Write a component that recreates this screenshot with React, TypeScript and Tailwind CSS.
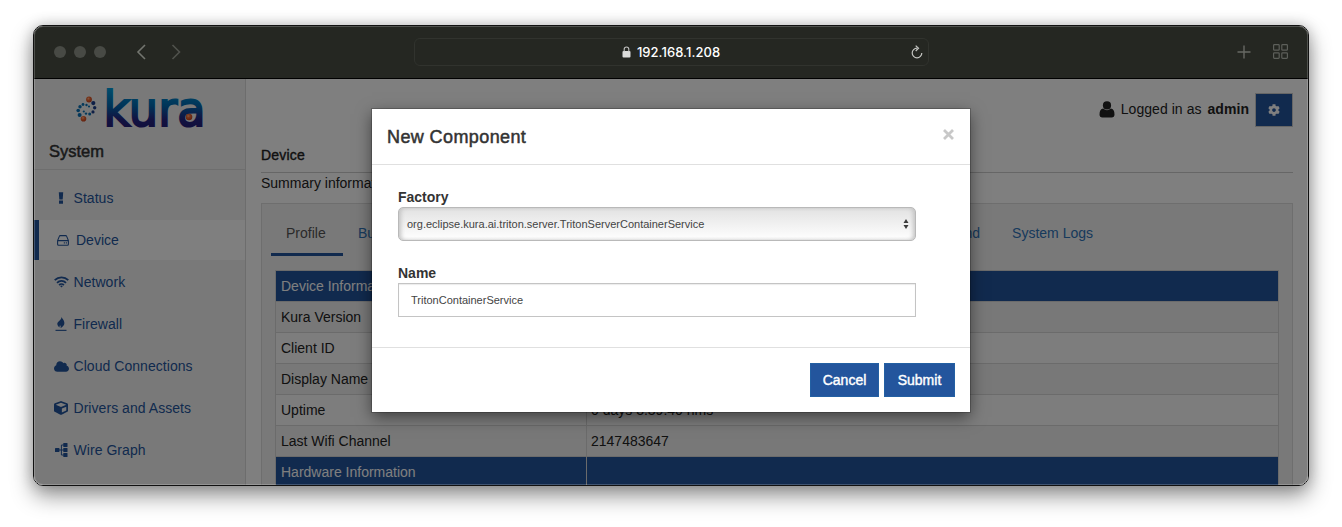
import type { ReactNode } from "react";
import { FaCloud, FaCog, FaCube } from "react-icons/fa";

function FlameIcon() {
  return (
    <svg width="12" height="14" viewBox="0 0 12 14" fill="currentColor">
      <path d="M6.6 0C7 1.6 9.4 3.2 9.4 6C9.4 8.4 7.6 9.8 5.4 11.2C6 9.8 5.8 9 5 8.2C4.6 9 4.5 9.6 4.6 10.6C3.2 9.6 2.3 8.2 2.3 6.8C2.3 4.4 6.5 3.2 6.6 0Z" />
      <rect x="0.5" y="12.8" width="11" height="1.1" />
    </svg>
  );
}

function AlertIcon() {
  return (
    <svg width="6" height="12" viewBox="0 0 6 12" fill="currentColor">
      <path d="M0.8 0.3H5.2L4.7 7.6H1.3ZM1 8.6H5V11.8H1Z" />
    </svg>
  );
}

function DriveIcon() {
  return (
    <svg width="12" height="11" viewBox="0 0 12 11" fill="none" stroke="currentColor" strokeWidth="1.1">
      <path d="M0.6 5.6L2.3 1.4Q2.6 0.6 3.4 0.6H8.6Q9.4 0.6 9.7 1.4L11.4 5.6V9.2Q11.4 10.2 10.4 10.2H1.6Q0.6 10.2 0.6 9.2ZM0.8 5.6H11.2" />
      <path d="M6.8 7.9H7.9M8.8 7.9H9.9" />
    </svg>
  );
}

function WifiIcon() {
  return (
    <svg width="15" height="12" viewBox="0 0 15 12" fill="none" stroke="currentColor" strokeWidth="1.8" className="shrink-0">
      <path d="M0.7 4.2A9.7 9.7 0 0 1 14.3 4.2" />
      <path d="M3 6.8A6.4 6.4 0 0 1 12 6.8" />
      <path d="M5.1 9.1A3.4 3.4 0 0 1 9.9 9.1" />
      <path d="M6.1 10L7.5 11.6L8.9 10Q7.5 9 6.1 10Z" fill="currentColor" stroke="none" />
    </svg>
  );
}

function GraphIcon() {
  return (
    <svg width="13" height="14" viewBox="0 0 13 14" fill="currentColor" className="shrink-0">
      <rect x="0" y="5" width="4.4" height="4" rx="0.6" />
      <rect x="8.3" y="0" width="4.2" height="4" rx="0.6" />
      <rect x="8.3" y="5" width="4.2" height="4" rx="0.6" />
      <rect x="8.3" y="10" width="4.2" height="4" rx="0.6" />
      <path d="M4 7H9M9 2H6.4V12H9" fill="none" stroke="currentColor" strokeWidth="1" />
    </svg>
  );
}

function UserIcon() {
  return (
    <svg width="16" height="17" viewBox="0 0 16 17" fill="#222" className="mr-1.5">
      <circle cx="8" cy="4.4" r="4.1" />
      <path d="M4.2 7.6Q0.5 8.2 0.5 13.6Q0.5 16.6 3.4 16.6H12.6Q15.5 16.6 15.5 13.6Q15.5 8.2 11.8 7.6Q8 11 4.2 7.6Z" />
    </svg>
  );
}

const navItems: { label: string; icon: ReactNode; active?: boolean }[] = [
  { label: "Status", icon: <AlertIcon /> },
  { label: "Device", icon: <DriveIcon />, active: true },
  { label: "Network", icon: <WifiIcon /> },
  { label: "Firewall", icon: <FlameIcon /> },
  { label: "Cloud Connections", icon: <FaCloud size={15} className="shrink-0" /> },
  { label: "Drivers and Assets", icon: <FaCube size={14} /> },
  { label: "Wire Graph", icon: <GraphIcon /> },
];

const dots: [number, number, number][] = [
  [7, 9, 1.4], [10.5, 9.5, 1.2], [13, 11, 1.1], [4, 11.2, 1.7], [2.2, 15, 1.8], [3.6, 19.5, 2],
  [17.3, 7.6, 2.1], [18.7, 12.2, 1.7], [17, 16.4, 1.6], [13.7, 18.6, 1.5], [10, 18.1, 1.2], [7.8, 16, 1.1],
];

function Logo() {
  return (
    <svg width="130" height="42" viewBox="0 0 130 42" className="block overflow-visible">
      <defs>
        <linearGradient id="word" x1="0" y1="1" x2="0" y2="39" gradientUnits="userSpaceOnUse">
          <stop offset="0" stopColor="#0099d8" />
          <stop offset="0.45" stopColor="#0068b0" />
          <stop offset="0.8" stopColor="#252583" />
          <stop offset="1" stopColor="#231f7b" />
        </linearGradient>
        <radialGradient id="ball" cx="0.4" cy="0.35" r="0.65">
          <stop offset="0" stopColor="#ffae88" />
          <stop offset="0.4" stopColor="#f06a32" />
          <stop offset="1" stopColor="#c8421d" />
        </radialGradient>
      </defs>
      {dots.map(([x, y, r], i) => (
        <circle key={i} cx={x} cy={y + 7.5} r={r} fill={i > 5 && i < 9 ? "#1f3f8c" : "#0a70b4"} />
      ))}
      <circle cx="13" cy="11.5" r="2.9" fill="url(#ball)" />
      <circle cx="7.5" cy="30.7" r="2.8" fill="url(#ball)" />
      <text x="27.5" y="37.8" fontFamily="DejaVu Sans" fontSize="48" textLength="102" lengthAdjust="spacingAndGlyphs" fill="url(#word)" stroke="url(#word)" strokeWidth="2">
        kura
      </text>
      <circle cx="113" cy="29" r="3.3" fill="url(#ball)" />
    </svg>
  );
}

function Sidebar() {
  return (
    <aside className="flex w-[212px] shrink-0 flex-col border-r border-[#dadada] bg-[#f3f3f3]">
      <div className="h-[91px] border-b border-[#dcdcdc] pl-[15px]">
        <div className="pt-[9px] pl-[27px]">
          <Logo />
        </div>
        <h2 className="mt-[9px] text-[16.5px] leading-6 text-[#333] [-webkit-text-stroke:0.5px]">System</h2>
      </div>
      <nav className="flex flex-col gap-[2px] pt-2">
        {navItems.map((item) => (
          <a
            key={item.label}
            className={
              item.active
                ? "flex h-10 items-center border-l-[5px] border-[#23559d] bg-white pl-[17px] text-[#23559d]"
                : "flex h-10 items-center pl-5 text-[#23559d]"
            }
          >
            <span className="flex w-[14px] shrink-0 items-center justify-center">{item.icon}</span>
            <span className={item.active ? "pl-1.5" : "pl-[5.5px] tracking-[0.05px]"}>{item.label}</span>
          </a>
        ))}
      </nav>
    </aside>
  );
}

const rows: [string, string][] = [
  ["Kura Version", ""],
  ["Client ID", ""],
  ["Display Name", ""],
  ["Uptime", "0 days 3:39:40 hms"],
  ["Last Wifi Channel", "2147483647"],
];

function Main() {
  return (
    <main className="flex min-w-0 flex-1 flex-col bg-white px-[15px]">
      <div className="flex h-[61px] shrink-0 items-center justify-end">
        <UserIcon />
        <span className="mr-1.5 tracking-[0.05px]">Logged in as</span>
        <b className="mr-1.5 tracking-[0.05px]">admin</b>
        <button className="flex h-[34px] w-[38px] items-center justify-center border border-[#ccc] bg-[#23559d] text-white">
          <FaCog size={12} />
        </button>
      </div>
      <h3 className="h-[33px] shrink-0 border-b border-[#ccc] pt-[5px] leading-5 tracking-[0.2px] [-webkit-text-stroke:0.4px]">Device</h3>
      <p className="h-[30px] shrink-0 leading-5">Summary information</p>
      <section className="flex-1 border border-[#dcdcdc] bg-[#f3f3f3] px-[9px] pt-[6px]">
        <div className="flex h-[46px] text-[#2f74b8]">
          <span className="flex w-[72px] items-center border-b-[3px] border-[#23559d] pt-[3px] pl-[15px] text-[#555]">Profile</span>
          <span className="flex items-center px-[15px]">Bundles</span>
          <span className="ml-auto flex items-center px-[15px]">Command</span>
          <span className="mr-[190px] ml-0.5 flex items-center pl-[15px]">System Logs</span>
        </div>
        <table className="mt-[14px] ml-1 w-[1004px] table-fixed border-collapse text-left">
          <colgroup>
            <col className="w-[311px]" />
            <col />
          </colgroup>
          <tbody>
            <HeaderRow label="Device Information" />
            {rows.map(([name, value]) => (
              <tr key={name} className="h-[31px] odd:bg-[#fafafa] even:bg-[#f1f1f1]">
                <td className="border border-[#d6d6d6] px-[5px] py-0">{name}</td>
                <td className="border border-[#d6d6d6] px-1 py-0">{value}</td>
              </tr>
            ))}
            <HeaderRow label="Hardware Information" />
          </tbody>
        </table>
      </section>
    </main>
  );
}

function HeaderRow({ label }: { label: string }) {
  return (
    <tr className="h-[31px] bg-[#23559d] text-white">
      <td className="border border-[#d6d6d6] px-[5px] py-0">{label}</td>
      <td className="border border-[#d6d6d6] px-1 py-0" />
    </tr>
  );
}

function Modal() {
  return (
    <div className="absolute inset-0 flex items-start justify-center bg-black/50 pt-[30px]">
      <div className="flex h-[303px] w-[598px] flex-col bg-white text-[#333] shadow-[0_5px_15px_rgba(0,0,0,0.5),0_0_0_1px_rgba(0,0,0,0.2)]">
        <header className="flex h-14 shrink-0 items-center justify-between border-b border-[#e0e0e0] px-[15px]">
          <h4 className="pt-px text-[18px] tracking-[0.4px] [-webkit-text-stroke:0.5px]">New Component</h4>
          <svg width="13" height="13" viewBox="0 0 13 13" stroke="#c8c8c8" strokeWidth="2.8" className="-mt-1">
            <path d="M2 2L11 11M11 2L2 11" />
          </svg>
        </header>
        <div className="flex h-[183px] shrink-0 flex-col border-b border-[#e0e0e0] pt-[22px] pr-[54px] pl-[26px]">
          <label className="font-bold leading-5">Factory</label>
          <div className="flex h-[34px] items-center justify-between rounded-[5px] border border-[#b9b9b9] bg-linear-to-b from-[#e2e2e2] to-white pr-[6px] pl-2 text-[11px] text-[#444] shadow-[inset_3px_0_4px_-1px_#c4c4c4,inset_-3px_0_4px_-1px_#c4c4c4]">
            <span>org.eclipse.kura.ai.triton.server.TritonServerContainerService</span>
            <svg width="6" height="10" viewBox="0 0 6 10" fill="#3c3c3c">
              <path d="M0.5 4L3 0L5.5 4ZM0.5 6L3 10L5.5 6Z" />
            </svg>
          </div>
          <label className="mt-[22px] font-bold leading-5">Name</label>
          <div className="flex h-[34px] items-center border border-[#c4c4c4] pl-3 text-[11px] text-[#444] shadow-[inset_0_1px_1px_rgba(0,0,0,0.08)]">
            TritonContainerService
          </div>
        </div>
        <footer className="flex flex-1 items-center justify-end gap-[5px] px-[15px] text-white [-webkit-text-stroke:0.4px]">
          <button className="h-[34px] w-[69px] border border-[#2360a3] bg-[#23559d]">Cancel</button>
          <button className="h-[34px] w-[71px] border border-[#2360a3] bg-[#23559d]">Submit</button>
        </footer>
      </div>
    </div>
  );
}

function TitleBar() {
  return (
    <div className="flex h-[53px] shrink-0 items-center border-b border-black bg-[#252722] text-[#5d5f5a]">
      <div className="flex w-[380px] items-center pl-5">
        <div className="flex gap-2">
          <i className="size-3 rounded-full bg-[#484a45]" />
          <i className="size-3 rounded-full bg-[#484a45]" />
          <i className="size-3 rounded-full bg-[#484a45]" />
        </div>
        <svg width="46" height="16" viewBox="0 0 46 16" fill="none" strokeWidth="1.6" className="ml-[30px]">
          <path d="M9 1L2 8L9 15" stroke="#73756f" />
          <path d="M36.5 1L43.5 8L36.5 15" stroke="#50524d" />
        </svg>
      </div>
      <div className="flex h-7 w-[515px] items-center rounded-md border border-[#31332e] pr-[5px] pl-1.5 text-white">
        <span className="w-2.5" />
        <div className="flex flex-1 items-center justify-center gap-[6px]">
          <svg width="9" height="12" viewBox="0 0 9 12" fill="none">
            <rect x="0.5" y="5" width="8" height="6.5" rx="1" fill="#dcdcdb" />
            <path d="M2.2 5.5V3.3a2.3 2.3 0 0 1 4.6 0V5.5" stroke="#c0c0bf" strokeWidth="1.1" />
          </svg>
          <span className="pt-0.5 font-[Inter,sans-serif] text-[13px] font-medium tracking-[0.05px]">192.168.1.208</span>
        </div>
        <svg width="12" height="14" viewBox="0 0 12 14" fill="none" stroke="#c4c5c2" strokeWidth="1.2">
          <path d="M6 3.2A4.8 4.8 0 1 0 10.8 8" />
          <path d="M4.7 0.6L7.5 3.3L4.7 6" />
        </svg>
      </div>
      <div className="flex flex-1 items-center justify-end gap-[22px] pr-5">
        <svg width="14" height="14" viewBox="0 0 14 14" stroke="#676964" strokeWidth="1.4">
          <path d="M7 0.5V13.5M0.5 7H13.5" />
        </svg>
        <svg width="15" height="15" viewBox="0 0 15 15" fill="none" stroke="#5d5f5a" strokeWidth="1.2" className="-mt-0.5">
          <rect x="0.6" y="0.6" width="5.6" height="5.6" rx="0.8" />
          <rect x="8.8" y="0.6" width="5.6" height="5.6" rx="0.8" />
          <rect x="0.6" y="8.8" width="5.6" height="5.6" rx="0.8" />
          <rect x="8.8" y="8.8" width="5.6" height="5.6" rx="0.8" />
        </svg>
      </div>
    </div>
  );
}

export default function App() {
  return (
    <div className="h-[527px] w-[1342px] overflow-hidden bg-white px-[33px] pt-[25px] font-['Liberation_Sans',Arial,sans-serif] text-[14px] text-[#222]">
      <div className="relative flex h-[461px] w-[1276px] flex-col overflow-hidden rounded-[10px] border border-[#111] shadow-[0_10px_22px_rgba(0,0,0,0.42),0_0_14px_rgba(0,0,0,0.2)]">
        <TitleBar />
        <div className="relative flex min-h-0 flex-1 overflow-hidden">
          <Sidebar />
          <Main />
          <Modal />
        </div>
        <div className="pointer-events-none absolute inset-0 rounded-[9px] border border-white/20" />
      </div>
    </div>
  );
}
